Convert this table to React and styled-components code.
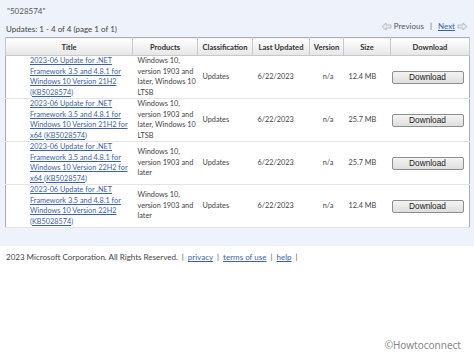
import React from 'react';
import styled, {createGlobalStyle} from 'styled-components';

const GlobalStyle = createGlobalStyle`
  body {
    margin: 0;
    background: #ffffff;
    font-family: Lato, "Noto Sans", sans-serif;
    color: #444;
  }
`;

const rows = [
    {title: '2023-06 Update for .NET Framework 3.5 and 4.8.1 for Windows 10 Version 21H2 (KB5028574)', products: 'Windows 10, version 1903 and later, Windows 10 LTSB', size: '12.4 MB'},
    {title: '2023-06 Update for .NET Framework 3.5 and 4.8.1 for Windows 10 Version 21H2 for x64 (KB5028574)', products: 'Windows 10, version 1903 and later, Windows 10 LTSB', size: '25.7 MB'},
    {title: '2023-06 Update for .NET Framework 3.5 and 4.8.1 for Windows 10 Version 22H2 for x64 (KB5028574)', products: 'Windows 10, version 1903 and later', size: '25.7 MB'},
    {title: '2023-06 Update for .NET Framework 3.5 and 4.8.1 for Windows 10 Version 22H2 (KB5028574)', products: 'Windows 10, version 1903 and later', size: '12.4 MB'},
];

const Arrow = ({flip}) => (
    <svg width="11" height="9" viewBox="0 0 11 9" style={{transform: flip ? 'scaleX(-1)' : 'none'}}>
        <path d="M1 4.5 L5 1 V3 H10 V6 H5 V8 Z" fill="#e6e9ee" stroke="#a9b0ba" strokeWidth="0.8"/>
    </svg>
);

const App = () => {
    return (
        <Page>
            <GlobalStyle/>
            <Panel>
                <Query>"5028574"</Query>
                <TopLine>
                    <span>Updates: 1 - 4 of 4 (page 1 of 1)</span>
                    <Pager>
                        <Arrow/>
                        <span>Previous</span>
                        <Sep>|</Sep>
                        <Link>Next</Link>
                        <Arrow flip/>
                    </Pager>
                </TopLine>
                <Table>
                    <colgroup>
                        <col style={{width: 127}}/>
                        <col style={{width: 65}}/>
                        <col style={{width: 55}}/>
                        <col style={{width: 57}}/>
                        <col style={{width: 34}}/>
                        <col style={{width: 47}}/>
                        <col style={{width: 79}}/>
                    </colgroup>
                    <thead>
                    <tr>
                        <Th>Title</Th>
                        <Th>Products</Th>
                        <Th>Classification</Th>
                        <Th>Last Updated</Th>
                        <Th>Version</Th>
                        <Th>Size</Th>
                        <Th>Download</Th>
                    </tr>
                    </thead>
                    <tbody>
                    {rows.map((r, i) => (
                        <tr key={i}>
                            <TitleCell><Link>{r.title}</Link></TitleCell>
                            <ProductsCell>{r.products}</ProductsCell>
                            <Td>Updates</Td>
                            <Td>6/22/2023</Td>
                            <Td $center>n/a</Td>
                            <Td>{r.size}</Td>
                            <ButtonCell><Button>Download</Button></ButtonCell>
                        </tr>
                    ))}
                    </tbody>
                </Table>
            </Panel>
            <Footer>
                <span>2023 Microsoft Corporation. All Rights Reserved.</span>
                <Sep>|</Sep><Link>privacy</Link>
                <Sep>|</Sep><Link>terms of use</Link>
                <Sep>|</Sep><Link>help</Link>
                <Sep>|</Sep>
            </Footer>
            <Watermark>©Howtoconnect</Watermark>
        </Page>
    );
};

const Page = styled.div`
  position: relative;
  width: 474px;
  height: 356px;
  overflow: hidden;
  font-size: 8px;
`;

const Panel = styled.div`
  background: #eef2fa;
  padding: 6px 5px 18px 5px;
`;

const Query = styled.div`
  color: #555;
  padding-left: 2px;
  height: 16px;
`;

const TopLine = styled.div`
  display: flex;
  justify-content: space-between;
  align-items: flex-end;
  padding: 0 1px 3px 1px;
  height: 12px;
`;

const Pager = styled.div`
  display: flex;
  align-items: center;
  gap: 2px;
  color: #555;
  margin-bottom: 3px;
`;

const Sep = styled.span`
  margin: 0 4px;
  color: #555;
`;

const Link = styled.a`
  color: #3d5fa8;
  text-decoration: underline;
  cursor: pointer;
`;

const Table = styled.table`
  width: 464px;
  border-collapse: collapse;
  table-layout: fixed;
  background: #fff;
  border: 1px solid #a9adb3;
  font-size: 7.3px;
`;

const Th = styled.th`
  height: 17px;
  padding: 0;
  font-weight: bold;
  font-size: 7.6px;
  color: #333;
  text-align: center;
  background: linear-gradient(#ffffff, #e6e6e6);
  border: 1px solid #c6c8cc;
  border-top: none;
`;

const Td = styled.td`
  height: 42px;
  padding: 0 2px 0 5px;
  vertical-align: middle;
  text-align: ${p => (p.$center ? 'center' : 'left')};
  color: #444;
  line-height: 10.5px;
  border-bottom: 1px solid #e4e4e4;
`;

const TitleCell = styled(Td)`
  padding-left: 24px;
  padding-right: 4px;
`;

const ProductsCell = styled(Td)`
  padding-right: 0;
`;

const ButtonCell = styled(Td)`
  padding: 0 0 0 1px;
`;

const Button = styled.button`
  display: block;
  width: 72px;
  height: 13px;
  padding: 0;
  font-family: "Liberation Sans", Arial, sans-serif;
  font-size: 8.3px;
  color: #222;
  background: linear-gradient(#f4f4f4, #dedede);
  border: 1px solid #8e8e8e;
  border-radius: 2px;
`;

const Footer = styled.div`
  padding: 6px 6px;
  color: #444;
  display: flex;
  align-items: center;
`;

const Watermark = styled.div`
  position: absolute;
  right: 13px;
  bottom: 4px;
  font-family: "Noto Sans", sans-serif;
  font-size: 10px;
  color: #888;
`;

export default App;
